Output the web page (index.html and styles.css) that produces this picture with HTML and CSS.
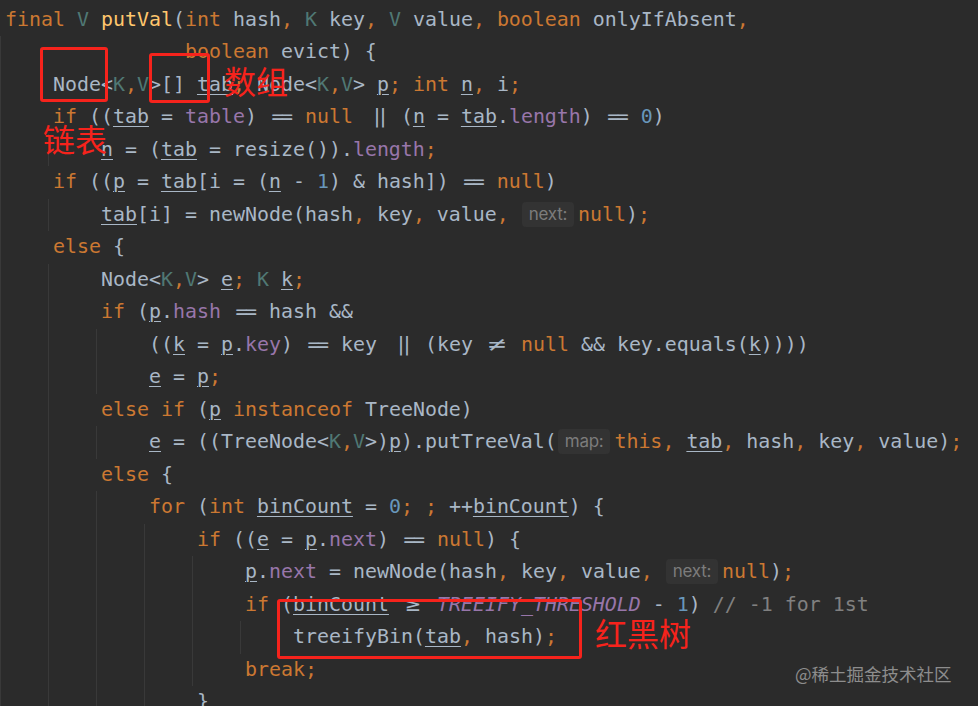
FILE: index.html
```html
<!DOCTYPE html>
<html lang="zh">
<head>
<meta charset="utf-8">
<title>HashMap.putVal</title>
<link rel="stylesheet" href="styles.css">
</head>
<body>
<div class="editor">
<div class="ln"><span class="code"><span class="k">final</span> <span class="t">V</span> <span class="m">putVal</span>(<span class="k">int</span> hash<span class="k">,</span> <span class="t">K</span> key<span class="k">,</span> <span class="t">V</span> value<span class="k">,</span> <span class="k">boolean</span> onlyIfAbsent<span class="k">,</span></span></div>
<div class="ln"><span class="g"></span><span class="code">           <span class="k">boolean</span> evict) {</span></div>
<div class="ln"><span class="g"></span><span class="code">Node&lt;<span class="t">K</span><span class="k">,</span><span class="t">V</span>&gt;[] <span class="u">tab</span><span class="k">;</span> Node&lt;<span class="t">K</span><span class="k">,</span><span class="t">V</span>&gt; <span class="u">p</span><span class="k">;</span> <span class="k">int</span> <span class="u">n</span><span class="k">,</span> i<span class="k">;</span></span></div>
<div class="ln"><span class="g"></span><span class="code"><span class="k">if</span> ((<span class="u">tab</span> = <span class="f">table</span>) <span class="eq">==</span> <span class="k">null</span> <span class="or">||</span> (<span class="u">n</span> = <span class="u">tab</span>.<span class="f">length</span>) <span class="eq">==</span> <span class="n">0</span>)</span></div>
<div class="ln"><span class="g"></span><span class="g"></span><span class="code"><span class="u">n</span> = (<span class="u">tab</span> = resize()).<span class="f">length</span><span class="k">;</span></span></div>
<div class="ln"><span class="g"></span><span class="code"><span class="k">if</span> ((<span class="u">p</span> = <span class="u">tab</span>[i = (<span class="u">n</span> - <span class="n">1</span>) &amp; hash]) <span class="eq">==</span> <span class="k">null</span>)</span></div>
<div class="ln"><span class="g"></span><span class="g"></span><span class="code"><span class="u">tab</span>[i] = newNode(hash<span class="k">,</span> key<span class="k">,</span> value<span class="k">,</span> <span class="hint">next:</span><span class="k">null</span>)<span class="k">;</span></span></div>
<div class="ln"><span class="g"></span><span class="code"><span class="k">else</span> {</span></div>
<div class="ln"><span class="g"></span><span class="g"></span><span class="code">Node&lt;<span class="t">K</span><span class="k">,</span><span class="t">V</span>&gt; <span class="u">e</span><span class="k">;</span> <span class="t">K</span> <span class="u">k</span><span class="k">;</span></span></div>
<div class="ln"><span class="g"></span><span class="g"></span><span class="code"><span class="k">if</span> (<span class="u">p</span>.<span class="f">hash</span> <span class="eq">==</span> hash &amp;&amp;</span></div>
<div class="ln"><span class="g"></span><span class="g"></span><span class="g"></span><span class="code">((<span class="u">k</span> = <span class="u">p</span>.<span class="f">key</span>) <span class="eq">==</span> key <span class="or">||</span> (key <span class="ne">≠</span> <span class="k">null</span> &amp;&amp; key.equals(<span class="u">k</span>))))</span></div>
<div class="ln"><span class="g"></span><span class="g"></span><span class="g"></span><span class="code"><span class="u">e</span> = <span class="u">p</span><span class="k">;</span></span></div>
<div class="ln"><span class="g"></span><span class="g"></span><span class="code"><span class="k">else if</span> (<span class="u">p</span> <span class="k">instanceof</span> TreeNode)</span></div>
<div class="ln"><span class="g"></span><span class="g"></span><span class="g"></span><span class="code"><span class="u">e</span> = ((TreeNode&lt;<span class="t">K</span><span class="k">,</span><span class="t">V</span>&gt;)<span class="u">p</span>).putTreeVal(<span class="hint">map:</span><span class="k">this</span><span class="k">,</span> <span class="u">tab</span><span class="k">,</span> hash<span class="k">,</span> key<span class="k">,</span> value)<span class="k">;</span></span></div>
<div class="ln"><span class="g"></span><span class="g"></span><span class="code"><span class="k">else</span> {</span></div>
<div class="ln"><span class="g"></span><span class="g"></span><span class="g"></span><span class="code"><span class="k">for</span> (<span class="k">int</span> <span class="u">binCount</span> = <span class="n">0</span><span class="k">;</span> <span class="k">;</span> ++<span class="u">binCount</span>) {</span></div>
<div class="ln"><span class="g"></span><span class="g"></span><span class="g"></span><span class="g"></span><span class="code"><span class="k">if</span> ((<span class="u">e</span> = <span class="u">p</span>.<span class="f">next</span>) <span class="eq">==</span> <span class="k">null</span>) {</span></div>
<div class="ln"><span class="g"></span><span class="g"></span><span class="g"></span><span class="g"></span><span class="g"></span><span class="code"><span class="u">p</span>.<span class="f">next</span> = newNode(hash<span class="k">,</span> key<span class="k">,</span> value<span class="k">,</span> <span class="hint">next:</span><span class="k">null</span>)<span class="k">;</span></span></div>
<div class="ln"><span class="g"></span><span class="g"></span><span class="g"></span><span class="g"></span><span class="g"></span><span class="code"><span class="k">if</span> (<span class="u">binCount</span> <span class="ge">≥</span> <span class="s">TREEIFY_THRESHOLD</span> - <span class="n">1</span>) <span class="c">// -1 for 1st</span></span></div>
<div class="ln"><span class="g"></span><span class="g"></span><span class="g"></span><span class="g"></span><span class="g"></span><span class="g"></span><span class="code">treeifyBin(<span class="u">tab</span><span class="k">,</span> hash)<span class="k">;</span></span></div>
<div class="ln"><span class="g"></span><span class="g"></span><span class="g"></span><span class="g"></span><span class="g"></span><span class="code"><span class="k">break;</span></span></div>
<div class="ln"><span class="g"></span><span class="g"></span><span class="g"></span><span class="g"></span><span class="code">}</span></div>

<div class="mark box1"></div>
<div class="mark box2"></div>
<div class="mark box3"></div>
<div class="label lab-array">数组</div>
<div class="label lab-list">链表</div>
<div class="label lab-tree">红黑树</div>
<div class="watermark">@稀土掘金技术社区</div>
</div>
</body>
</html>
```

FILE: styles.css
```css
html, body {
  margin: 0;
  padding: 0;
}

body {
  background: #2b2b2b;
  width: 978px;
  height: 706px;
  overflow: hidden;
}

.editor {
  position: relative;
  padding-top: 3.5px;
  font-family: "DejaVu Sans Mono", "Liberation Mono", monospace;
  font-size: 19.93px;
  color: #a9b7c6;
}

.ln {
  display: flex;
  height: 32.5px;
  line-height: 32.5px;
  white-space: pre;
}

.g {
  flex: none;
  width: 48px;
  box-sizing: border-box;
  border-left: 1px solid #393939;
}

.code {
  margin-left: 5px;
  white-space: pre;
}

.k { color: #cc7832; }
.t { color: #507874; }
.f { color: #9876aa; }
.m { color: #ffc66d; }
.n { color: #6897bb; }
.c { color: #808080; }
.s { color: #9876aa; font-style: italic; }

.u {
  text-decoration: underline;
  text-decoration-thickness: 1px;
  text-underline-offset: 3px;
}

.eq {
  display: inline-block;
  width: 24px;
  letter-spacing: -2.5px;
  text-align: center;
}

.or {
  display: inline-block;
  width: 24px;
  letter-spacing: -6px;
  text-align: center;
}

.ne, .ge {
  display: inline-block;
  width: 24px;
  text-align: center;
}

.ne {
  transform: scaleX(1.5);
}

.ge {
  transform: scaleX(1.2);
}

.hint {
  display: inline-block;
  vertical-align: top;
  margin: 3px 4px 0 1px;
  padding: 0 7px;
  height: 25px;
  line-height: 25px;
  border-radius: 4px;
  background: #333333;
  color: #7c7c7c;
  font-family: Inter, "Noto Sans", sans-serif;
  font-size: 17px;
  letter-spacing: -0.3px;
}

.mark {
  position: absolute;
  box-sizing: border-box;
  border: 3px solid #f6231c;
  border-radius: 3px;
}

.box1 { left: 40px; top: 47px; width: 68px; height: 55px; }
.box2 { left: 149px; top: 53px; width: 61px; height: 50px; }
.box3 { left: 277px; top: 599px; width: 305px; height: 60px; }

.label {
  position: absolute;
  font-family: "Noto Sans CJK SC", sans-serif;
  font-size: 32px;
  line-height: 32px;
  color: #f6231c;
  white-space: nowrap;
}

.lab-array { left: 224px; top: 64px; }
.lab-list { left: 43px; top: 122px; }
.lab-tree { left: 595px; top: 616px; }

.watermark {
  position: absolute;
  left: 795px;
  top: 663px;
  font-family: "Noto Sans CJK SC", sans-serif;
  font-size: 17.5px;
  line-height: 22px;
  color: #8d8d8d;
  white-space: nowrap;
}
```
